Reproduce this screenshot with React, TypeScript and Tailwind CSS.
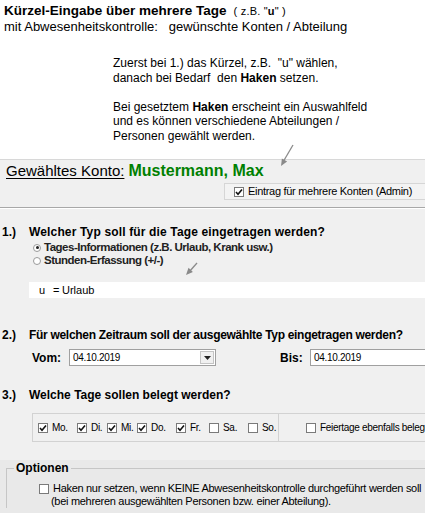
import React from "react";

const font = { fontFamily: '"Liberation Sans", Arial, sans-serif' };

const Check = ({ checked }: { checked?: boolean }) => (
  <span className="inline-flex h-[10px] w-[10px] shrink-0 items-center justify-center border border-[#7a7a7a] bg-white">
    {checked && (
      <svg viewBox="0 0 8 8" className="h-[8px] w-[8px]">
        <path d="M1 4 L3 6.2 L7 1.5" fill="none" stroke="#111" strokeWidth="1.6" />
      </svg>
    )}
  </span>
);

const Radio = ({ checked }: { checked?: boolean }) => (
  <span className="inline-flex h-[8px] w-[8px] shrink-0 items-center justify-center rounded-full border border-[#9a9a9a] bg-white">
    {checked && <span className="h-[3px] w-[3px] rounded-full bg-[#222]" />}
  </span>
);

const Arrow = ({ d, head }: { d: string; head: string }) => (
  <>
    <path d={d} stroke="#8a8a8a" strokeWidth="1.3" fill="none" />
    <polygon points={head} fill="#8a8a8a" />
  </>
);

const days = [
  { label: "Mo.", on: true, w: "w-[39px]" },
  { label: "Di.", on: true, w: "w-[30px]" },
  { label: "Mi.", on: true, w: "w-[30px]" },
  { label: "Do.", on: true, w: "w-[39px]" },
  { label: "Fr.", on: true, w: "w-[33px]" },
  { label: "Sa.", on: false, w: "w-[39px]" },
  { label: "So.", on: false, w: "w-[30px]" },
];

export default function App() {
  return (
    <div className="relative h-[513px] w-[425px] overflow-hidden bg-white text-black" style={font}>
      {/* Beschreibung oben */}
      <div className="h-[159px] bg-white">
        <div className="pl-[4px] pt-[3px]">
          <div className="text-[13px] leading-[16px]">
            <span className="text-[13.5px] font-bold">Kürzel-Eingabe über mehrere Tage</span>
            <span className="ml-[7px] text-[11px] tracking-[0.2px]">
              ( z.B. "<b>u</b>" )
            </span>
          </div>
          <div className="text-[13px] leading-[16px]">
            mit Abwesenheitskontrolle:&nbsp;&nbsp; gewünschte Konten / Abteilung
          </div>
        </div>
        <div className="ml-[113px] mt-[21px] text-[12px] leading-[14.5px]">
          <div>Zuerst bei 1.) das Kürzel, z.B.&nbsp; "u" wählen,</div>
          <div>
            danach bei Bedarf&nbsp; den <b>Haken</b> setzen.
          </div>
          <div className="h-[14.5px]" />
          <div>
            Bei gesetztem <b>Haken</b> erscheint ein Auswahlfeld
          </div>
          <div>und es können verschiedene Abteilungen /</div>
          <div>Personen gewählt werden.</div>
        </div>
      </div>

      {/* Dialog */}
      <div className="h-[354px] border-t border-[#d8d8d8] bg-[#f0f0f0]">
        <div className="flex h-[22px] items-center pl-[6px] text-[15px]">
          <span className="underline underline-offset-2">Gewähltes Konto:</span>
          <span className="ml-[4px] text-[16px] font-bold text-[#008000]">Mustermann, Max</span>
        </div>

        <div className="ml-[224px] mt-[1px] flex h-[17px] items-center gap-[4px] border-b border-l border-t border-[#d6d6d6] bg-[#f3f3f3] pl-[9px] text-[11px] tracking-[-0.3px]">
          <Check checked />
          <span>Eintrag für mehrere Konten (Admin)</span>
        </div>

        <div className="mt-[7px] border-b border-t border-b-white border-t-[#a8a8a8]" />

        <div className="mt-[15px] flex text-[12px] font-bold leading-[16px]">
          <span className="w-[29px] pl-[2px]">1.)</span>
          <span className="tracking-[0.15px]">Welcher Typ soll für die Tage eingetragen werden?</span>
        </div>
        <div className="mt-[1px] pl-[33px] text-[11.5px] font-bold leading-[13px] tracking-[-0.5px] text-[#222]">
          <div className="flex items-center gap-[3px]">
            <Radio checked />
            <span>Tages-Informationen (z.B. Urlaub, Krank usw.)</span>
          </div>
          <div className="flex items-center gap-[3px]">
            <Radio />
            <span>Stunden-Erfassung (+/-)</span>
          </div>
        </div>

        <div className="ml-[29px] mt-[15px] flex h-[16px] items-center bg-white text-[11px]">
          <span className="w-[24px] pl-[10px]">u</span>
          <span className="w-[9px]">=</span>
          <span>Urlaub</span>
        </div>

        <div className="mt-[29px] flex text-[12px] font-bold leading-[16px]">
          <span className="w-[29px] pl-[2px]">2.)</span>
          <span className="tracking-[-0.3px]">Für welchen Zeitraum soll der ausgewählte Typ eingetragen werden?</span>
        </div>

        <div className="mt-[6px] flex h-[17px] items-center text-[12px]">
          <span className="w-[69px] pl-[32px] font-bold">Vom:</span>
          <div className="flex h-[17px] w-[147px] items-center border border-[#a0a0a0] bg-white">
            <span className="flex-1 pl-[3px] text-[10px] tracking-[-0.3px]">04.10.2019</span>
            <span className="mr-[1px] flex h-[13px] w-[14px] items-center justify-center border border-[#c4c4c4] bg-[#f0f0f0]">
              <svg viewBox="0 0 7 4" className="h-[4px] w-[7px]">
                <polygon points="0,0 7,0 3.5,4" fill="#222" />
              </svg>
            </span>
          </div>
          <span className="ml-[64px] w-[30px] font-bold">Bis:</span>
          <div className="flex h-[17px] flex-1 items-center border border-r-0 border-[#a0a0a0] bg-white">
            <span className="pl-[3px] text-[10px] tracking-[-0.3px]">04.10.2019</span>
          </div>
        </div>

        <div className="mt-[21px] flex text-[12px] font-bold leading-[16px]">
          <span className="w-[29px] pl-[2px]">3.)</span>
          <span>Welche Tage sollen belegt werden?</span>
        </div>

        <div className="ml-[32px] mt-[10px] flex h-[29px] border border-r-0 border-[#d2d2d2] text-[10px] tracking-[-0.3px]">
          <div className="flex w-[253px] items-center border-r border-[#d2d2d2] pl-[5px]">
            {days.map((d) => (
              <div key={d.label} className={`flex items-center gap-[4px] ${d.w}`}>
                <Check checked={d.on} />
                <span>{d.label}</span>
              </div>
            ))}
          </div>
          <div className="flex flex-1 items-center gap-[4px] whitespace-nowrap pl-[27px]">
            <Check />
            <span>Feiertage ebenfalls belegen</span>
          </div>
        </div>

        <div className="mt-[18px] h-[100px] bg-[#e9e9e9]">
          <fieldset className="ml-[6px] border-l border-t border-[#c6c6c6]">
            <legend className="ml-[7px] px-[2px] text-[12px] font-bold leading-[16px]">Optionen</legend>
            <div className="flex pl-[32px] pt-[6px] text-[11px] leading-[13px] tracking-[-0.3px] whitespace-nowrap">
              <span className="mt-[2px]">
                <Check />
              </span>
              <div className="ml-[4px]">
                <div>Haken nur setzen, wenn KEINE Abwesenheitskontrolle durchgeführt werden soll</div>
                <div className="-ml-[2px]">(bei mehreren ausgewählten Personen bzw. einer Abteilung).</div>
              </div>
            </div>
          </fieldset>
        </div>
      </div>

      {/* Hinweispfeile */}
      <svg className="pointer-events-none absolute left-0 top-0" width="425" height="513">
        <Arrow d="M293 145 L283 162" head="281,166 287.1,161.4 281.9,158.4" />
        <Arrow d="M197 263 L189 272" head="186,275 192.9,271.9 188.5,267.8" />
      </svg>
    </div>
  );
}
